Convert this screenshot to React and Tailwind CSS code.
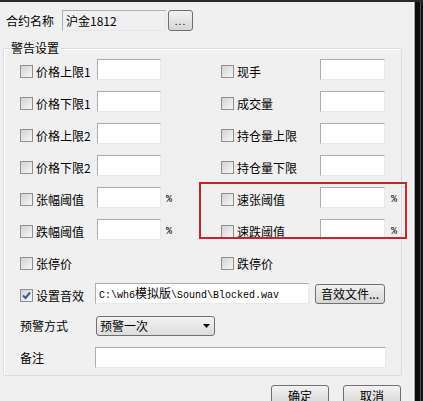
import React from 'react';

const font = { fontFamily: '"Noto Sans CJK SC", "Liberation Sans", sans-serif' };

const Checkbox = ({ checked }) => (
  <span className="w-[13px] h-[13px] shrink-0 border border-[#8e8f8f] bg-gradient-to-br from-[#d2d2d2] to-[#f7f7f7] flex items-center justify-center">
    {checked && (
      <svg width="9" height="9" viewBox="0 0 9 9">
        <path d="M1 4.5 L3.5 7 L8 1.5" fill="none" stroke="#3c5a9a" strokeWidth="2" />
      </svg>
    )}
  </span>
);

const TextBox = ({ w, children, grey }) => (
  <div
    className={`h-[21px] border border-[#abadb3] border-r-[#e3e9ef] border-b-[#e3e9ef] flex items-center px-[3px] ${grey ? 'bg-[#f0f0f0]' : 'bg-white'}`}
    style={{ width: w }}
  >
    {children}
  </div>
);

const Button = ({ w, h = 20, children }) => (
  <div
    className="border border-[#707070] rounded-[3px] bg-gradient-to-b from-[#f2f2f2] to-[#d6d6d6] flex items-center justify-center text-[12px] leading-none shrink-0"
    style={{ width: w, height: h }}
  >
    {children}
  </div>
);

const CheckLabel = ({ label, width, checked }) => (
  <div className="flex items-center mt-[4px] shrink-0" style={{ width }}>
    <Checkbox checked={checked} />
    <span className="ml-[3px] text-[12px] leading-none">{label}</span>
  </div>
);

const mono = { fontFamily: '"Liberation Mono", "Noto Sans CJK SC", monospace' };

const rows = [
  ['价格上限1', '现手'],
  ['价格下限1', '成交量'],
  ['价格上限2', '持仓量上限'],
  ['价格下限2', '持仓量下限'],
  ['张幅阈值', '速张阈值', true],
  ['跌幅阈值', '速跌阈值', true],
];

export default function App() {
  return (
    <div className="w-[423px] h-[401px] bg-[#161616] overflow-hidden relative text-black" style={font}>
      <div className="h-[2px] bg-[#2a2a2a]" />
      <div className="flex h-[399px]">
        <div className="w-[413px] bg-[#f0f0f0] flex flex-col">
          {/* header */}
          <div className="flex items-center mt-[8px] h-[21px]">
            <span className="ml-[6px] w-[56px] text-[12px] leading-none">合约名称</span>
            <TextBox w={104} grey>
              <span className="text-[12px] leading-none">沪金1812</span>
            </TextBox>
            <div className="ml-[2px]">
              <Button w={25} h={21}>
                <span className="text-[10px] tracking-[1px]">...</span>
              </Button>
            </div>
          </div>

          {/* group box */}
          <fieldset className="ml-[3px] mt-[9px] w-[399px] border border-[#d5dfe5] rounded-[2px] pb-[7px] shadow-[inset_1px_1px_0_#fff]">
            <legend className="ml-[6px] px-[1px] text-[12px] leading-[16px]">警告设置</legend>
            <div className="flex flex-col gap-[11px] pt-[3px] pl-[16px]">
              {rows.map(([l, r, pct]) => (
                <div key={l} className="flex items-center h-[21px]">
                  <CheckLabel label={l} width={77} />
                  <TextBox w={64} />
                  <span className="w-[60px] pl-[5px] text-[10px] leading-none mt-[4px]" style={mono}>
                    {pct ? '%' : ''}
                  </span>
                  <CheckLabel label={r} width={99} />
                  <TextBox w={65} />
                  {pct && (
                    <span className="pl-[6px] text-[10px] leading-none mt-[4px]" style={mono}>
                      %
                    </span>
                  )}
                </div>
              ))}
              <div className="flex items-center h-[21px]">
                <CheckLabel label="张停价" width={201} />
                <CheckLabel label="跌停价" width={100} />
              </div>
              <div className="flex items-center h-[21px]">
                <CheckLabel label="设置音效" width={75} checked />
                <TextBox w={214}>
                  <span className="text-[10px] leading-none" style={mono}>
                    C:\wh6<span className="text-[12px]" style={font}>模拟版</span>\Sound\Blocked.wav
                  </span>
                </TextBox>
                <div className="ml-[6px]">
                  <Button w={70}>音效文件...</Button>
                </div>
              </div>
              <div className="flex items-center h-[21px]">
                <span className="w-[76px] text-[12px] leading-none">预警方式</span>
                <div className="w-[119px] h-[20px] border border-[#707070] rounded-[3px] bg-gradient-to-b from-[#f3f3f3] to-[#dcdcdc] flex items-center justify-between pl-[3px] pr-[4px]">
                  <span className="text-[12px] leading-none">预警一次</span>
                  <svg width="7" height="4" viewBox="0 0 7 4">
                    <path d="M0 0 H7 L3.5 4 Z" fill="#000" />
                  </svg>
                </div>
              </div>
              <div className="flex items-center h-[21px]">
                <span className="w-[75px] text-[12px] leading-none">备注</span>
                <TextBox w={291} />
              </div>
            </div>
          </fieldset>

          {/* bottom buttons */}
          <div className="flex mt-[9px] ml-[271px] gap-[14px]">
            <Button w={58} h={22}>确定</Button>
            <Button w={58} h={22}>取消</Button>
          </div>
        </div>
        <div className="w-px bg-[#fbfbfb]" />
        <div className="w-px bg-[#a0a0a0]" />
        <div className="w-[5px] bg-[#0e0e0e]" />
        <div className="w-px bg-[#505050]" />
        <div className="flex-1 bg-[#121212]" />
      </div>

      {/* red highlight annotation */}
      <div className="absolute left-[199px] top-[182px] w-[208px] h-[57px] border-2 border-[#c4262b]" />
    </div>
  );
}
